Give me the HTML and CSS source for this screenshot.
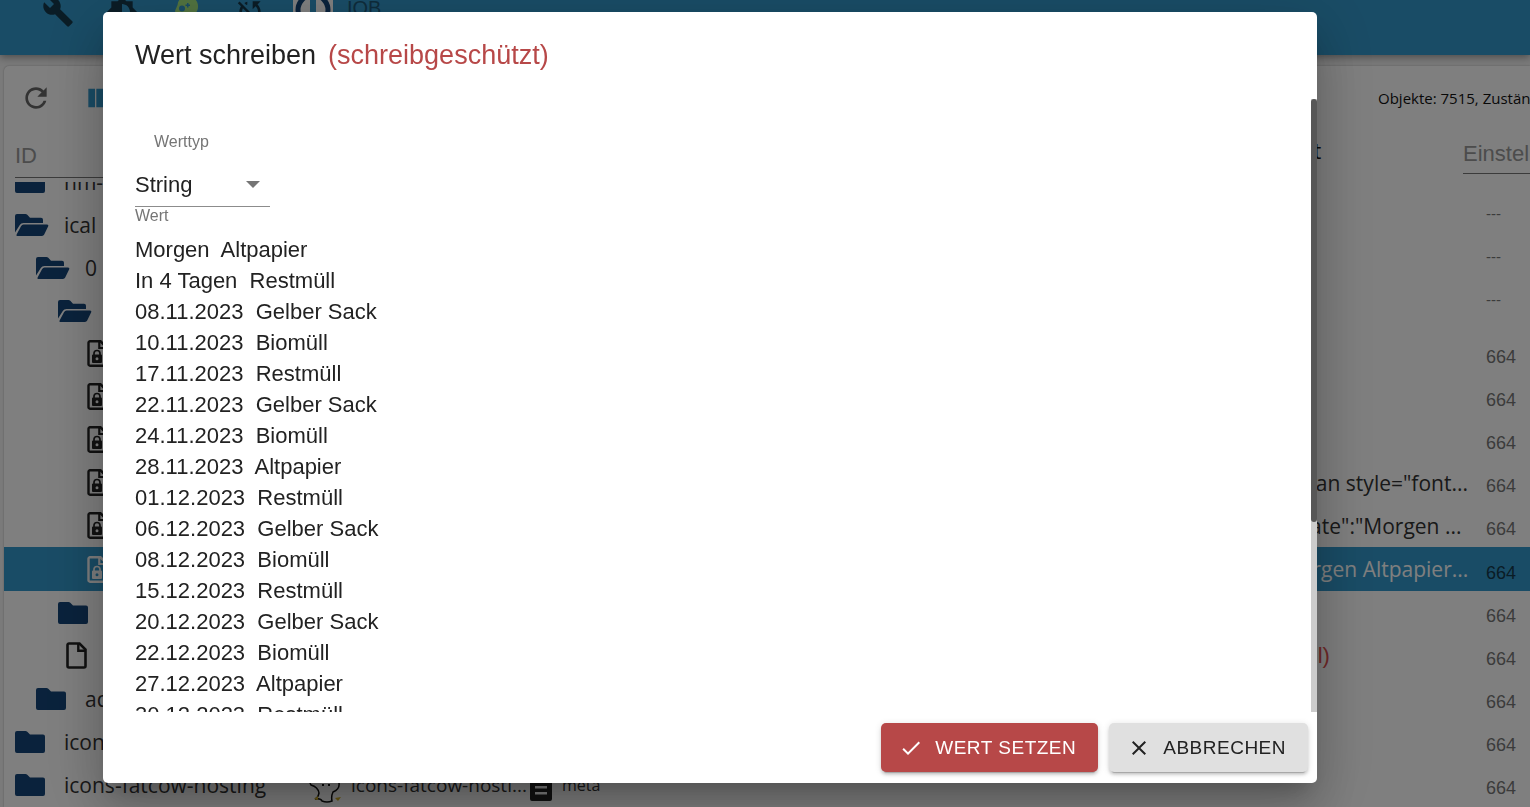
FILE: index.html
```
<!DOCTYPE html>
<html lang="de">
<head>
    <meta charset="UTF-8">
    <meta name="viewport" content="width=device-width, initial-scale=1.0">
    <title>Objekte</title>
    <link rel="stylesheet" href="styles.css">
</head>
<body>

    <!-- icons used more than once -->
    <svg class="sprite" aria-hidden="true">
        <symbol id="folder" viewBox="0 0 30 22">
            <path d="M2 0h8.500q1 0 1.800.8L15 3.500h13a2 2 0 0 1 2 2V20a2 2 0 0 1-2 2H2a2 2 0 0 1-2-2V2a2 2 0 0 1 2-2z"/>
        </symbol>
        <symbol id="folder-open" viewBox="0 0 34 22">
            <path d="M0 18.500V2a2 2 0 0 1 2-2h8.500q1 0 1.800.8L15 3.700h11a2 2 0 0 1 2 2V9H8.500Q6 9 4.800 11z"/>
            <path d="M8.500 10.500H32q2 0 1.200 1.800l-4 8.300Q28.500 22 27 22H2.500Q.8 22 1.600 20.500L6 12.200q.9-1.700 2.500-1.700z"/>
        </symbol>
        <symbol id="file" viewBox="0 0 21 27">
            <path d="M3 1.500h10.500l6 6V24a1.500 1.500 0 0 1-1.500 1.500H3A1.500 1.500 0 0 1 1.500 24V3A1.500 1.500 0 0 1 3 1.500z" fill="none" stroke="currentColor" stroke-width="2.600"/>
            <path d="M12.300 1.500v7.200h7" fill="none" stroke="currentColor" stroke-width="2.400"/>
        </symbol>
        <symbol id="file-lock" viewBox="0 0 21 27">
            <path d="M3 1.300h10.500l6 6V24.200a1.500 1.500 0 0 1-1.500 1.500H3a1.500 1.500 0 0 1-1.500-1.500V2.800A1.500 1.500 0 0 1 3 1.300z" fill="none" stroke="currentColor" stroke-width="2.400"/>
            <path d="M12.300 1.500v6.500h7" fill="none" stroke="currentColor" stroke-width="2.200"/>
            <path d="M7 15v-1.500a3 3 0 0 1 6 0V15" fill="none" stroke="currentColor" stroke-width="1.700"/>
            <path fill-rule="evenodd" d="M6 14.500h8q1 0 1 1V22q0 1-1 1H6q-1 0-1-1v-6.500q0-1 1-1zm4 2.700a1.500 1.500 0 1 0 0 3 1.500 1.500 0 0 0 0-3z"/>
        </symbol>
    </svg>

    <header class="topbar">
        <svg class="top-icon" viewBox="0 0 24 24"><path d="M22.700 19l-9.100-9.100c.9-2.300.4-5-1.500-6.900-2-2-5-2.400-7.400-1.300L9 6 6 9 1.600 4.700C.4 7.100.9 10.100 2.900 12.100c1.900 1.900 4.600 2.400 6.900 1.500l9.100 9.100c.4.4 1 .4 1.400 0l2.300-2.300c.5-.4.5-1.100.1-1.400z"/></svg>
        <svg class="top-icon" viewBox="0 0 24 24"><path fill-rule="evenodd" d="M20 15.310L23.310 12 20 8.690V4h-4.690L12 .69 8.690 4H4v4.690L.69 12 4 15.310V20h4.690L12 23.310 15.310 20H20v-4.690zM12 18V6c3.310 0 6 2.690 6 6s-2.690 6-6 6z"/></svg>
        <svg class="top-icon head" viewBox="0 0 32 32"><path fill-rule="evenodd" d="M17 0a9.500 9.500 0 0 0-9.500 9L5 15q0 1.500 1.500 1.500H8V22q0 2 2 2h3v4h9v-8a10.500 10.500 0 0 0-5-20zM12 9.500a3 3 0 1 0 0 6 3 3 0 0 0 0-6zM17 7v1.500h-1.500V10H17v1.500h1.500V10H20V8.500h-1.500V7z"/></svg>
        <svg class="top-icon" viewBox="0 0 24 24"><path d="M10 6.350V4.260c-.8.210-1.550.54-2.230.96l1.460 1.460c.25-.12.5-.24.77-.33zm-7.140-.94l2.360 2.360C4.450 8.990 4 10.440 4 12c0 2.210.91 4.200 2.360 5.640L4 20h6v-6l-2.240 2.240C6.680 15.150 6 13.660 6 12c0-1 .25-1.940.68-2.770l8.080 8.080c-.25.13-.5.25-.77.34v2.090c.8-.21 1.550-.54 2.230-.96l2.360 2.360 1.270-1.270L4.140 4.140 2.860 5.410zM20 4h-6v6l2.240-2.240C17.320 8.850 18 10.340 18 12c0 1-.25 1.940-.68 2.770l1.460 1.460C19.550 15.010 20 13.560 20 12c0-2.210-.91-4.200-2.360-5.640L20 4z"/></svg>
        <div class="host">
            <svg class="host-logo" viewBox="0 0 40 40"><circle cx="20" cy="22" r="15" fill="none" stroke="#144578" stroke-width="5"/><path d="M17 7h6v28h-6z" fill="#3399cc"/></svg>
            <span class="host-name">IOB</span>
        </div>
    </header>

    <main class="objects">
        <div class="toolbar">
            <button class="tool" aria-label="Aktualisieren"><svg viewBox="0 0 24 24"><path d="M17.650 6.350C16.200 4.900 14.210 4 12 4c-4.420 0-7.990 3.580-7.990 8s3.570 8 7.990 8c3.730 0 6.840-2.550 7.730-6h-2.080c-.82 2.330-3.040 4-5.650 4-3.310 0-6-2.690-6-6s2.690-6 6-6c1.660 0 3.140.69 4.220 1.780L13 11h7V4l-2.350 2.350z"/></svg></button>
            <button class="tool columns" aria-label="Spalten"><svg viewBox="0 0 24 24"><path d="M10 19h5V5h-5v14zm-6 0h5V5H4v14zM16 5v14h5V5h-5z"/></svg></button>
            <span class="counts">Objekte: 7515, Zustände: 6120</span>
        </div>

        <div class="filters">
            <input class="filter" type="text" placeholder="ID" aria-label="ID">
            <span class="head-value">Wert</span>
            <input class="filter settings" type="text" placeholder="Einstellungen" aria-label="Einstellungen">
        </div>

        <div class="tree">
            <div class="row"><svg class="folder"><use href="#folder"/></svg><span>hm-rpc</span></div>
            <div class="row"><svg class="folder open"><use href="#folder-open"/></svg><span>ical</span><span class="acl empty">---</span></div>
            <div class="row level-1"><svg class="folder open"><use href="#folder-open"/></svg><span>0</span><span class="acl empty">---</span></div>
            <div class="row level-2"><svg class="folder open"><use href="#folder-open"/></svg><span>data</span><span class="acl empty">---</span></div>
            <div class="row level-3"><svg class="file"><use href="#file-lock"/></svg><span class="acl">664</span></div>
            <div class="row level-3"><svg class="file"><use href="#file-lock"/></svg><span class="acl">664</span></div>
            <div class="row level-3"><svg class="file"><use href="#file-lock"/></svg><span class="acl">664</span></div>
            <div class="row level-3"><svg class="file"><use href="#file-lock"/></svg><span class="value">&lt;span style="font...</span><span class="acl">664</span></div>
            <div class="row level-3"><svg class="file"><use href="#file-lock"/></svg><span class="value">{"date":"Morgen ...</span><span class="acl">664</span></div>
            <div class="row level-3 selected"><svg class="file"><use href="#file-lock"/></svg><span class="value">Morgen Altpapier...</span><span class="acl">664</span></div>
            <div class="row level-2"><svg class="folder"><use href="#folder"/></svg><span class="acl">664</span></div>
            <div class="row level-2"><svg class="file plain"><use href="#file"/></svg><span class="value null">(null)</span><span class="acl">664</span></div>
            <div class="row level-1"><svg class="folder"><use href="#folder"/></svg><span>admin</span><span class="acl">664</span></div>
            <div class="row"><svg class="folder"><use href="#folder"/></svg><span>icons</span><span class="acl">664</span></div>
            <div class="row">
                <svg class="folder"><use href="#folder"/></svg><span class="id">icons-fatcow-hosting</span>
                <svg class="cow" viewBox="0 0 34 36"><path d="M4 8Q0 14 3 18q7 2 8 8-1 5-4 6 6-1 7 2 5 2 10 0-1-5 1-9 7-3 6-9 0-6-3-8" fill="none" stroke="#111" stroke-width="1.500"/><path d="M14 18h2M20 18h2" stroke="#111" stroke-width="2"/><path d="M6 32l4-3v4zM27 31l6-1-3 4z" fill="#d6b52a"/></svg>
                <span class="name">icons-fatcow-hosti...</span>
                <svg class="meta-icon" viewBox="0 0 22 28"><path fill-rule="evenodd" d="M2 0h12l8 8v18a2 2 0 0 1-2 2H2a2 2 0 0 1-2-2V2Q0 0 2 0zm3 13v2.500h12V13zm0 6v2.500h12V19z"/></svg>
                <span class="type">meta</span>
                <span class="acl">664</span>
            </div>
        </div>
    </main>

    <div class="backdrop">
        <form class="dialog" role="dialog" aria-labelledby="dialogTitle">
            <h2 class="dialog-title" id="dialogTitle">Wert schreiben <span class="readonly">(schreibgeschützt)</span></h2>

            <div class="dialog-body">
                <div class="dialog-content">
                    <label class="type-label" for="valueType">Werttyp</label>
                    <div class="select-wrap">
                        <select id="valueType">
                            <option>String</option>
                            <option>Number</option>
                            <option>Boolean</option>
                            <option>JSON</option>
                        </select>
                        <svg class="arrow" viewBox="0 0 14 7"><path d="M0 0h14L7 7z"/></svg>
                    </div>
                    <label class="value-label" for="value">Wert</label>
                    <textarea id="value" rows="24">Morgen  Altpapier
In 4 Tagen  Restmüll
08.11.2023  Gelber Sack
10.11.2023  Biomüll
17.11.2023  Restmüll
22.11.2023  Gelber Sack
24.11.2023  Biomüll
28.11.2023  Altpapier
01.12.2023  Restmüll
06.12.2023  Gelber Sack
08.12.2023  Biomüll
15.12.2023  Restmüll
20.12.2023  Gelber Sack
22.12.2023  Biomüll
27.12.2023  Altpapier
30.12.2023  Restmüll</textarea>
                </div>
                <div class="scrollbar"><div class="thumb"></div></div>
            </div>

            <div class="dialog-actions">
                <button type="button" class="btn primary"><svg viewBox="0 0 24 24"><path d="M9 16.170L4.830 12l-1.420 1.410L9 19 21 7l-1.410-1.410z"/></svg>Wert setzen</button>
                <button type="button" class="btn"><svg viewBox="0 0 24 24"><path d="M19 6.410L17.590 5 12 10.590 6.410 5 5 6.410 10.590 12 5 17.590 6.410 19 12 13.410 17.590 19 19 17.590 13.410 12z"/></svg>Abbrechen</button>
            </div>
        </form>
    </div>

</body>
</html>
```
FILE: styles.css
```
* {
    box-sizing: border-box;
}
body {
    margin: 0;
    height: 100vh;
    overflow: hidden;
    display: flex;
    flex-direction: column;
    background-color: #f4f4f4;
    color: #333;
    font-family: "Open Sans", sans-serif;
    font-size: 21px;
}
svg {
    fill: currentColor;
    flex: none;
}
.sprite {
    display: none;
}

/* top bar */
.topbar {
    flex: none;
    height: 55px;
    padding-left: 42px;
    display: flex;
    align-items: flex-start;
    gap: 32px;
    background-color: #3399cc;
    box-shadow: 0 2px 8px rgba(0, 0, 0, 0.4);
    color: #15394c;
}
.top-icon {
    width: 32px;
    height: 32px;
    margin-top: -4px;
}
.head {
    color: #a4e57f;
}
.host {
    display: flex;
    align-items: center;
    gap: 14px;
    margin: -12px 0 0 -5px;
    height: 40px;
}
.host-logo {
    width: 40px;
    height: 40px;
    background-color: #fff;
}
.host-name {
    font-family: "Liberation Sans", sans-serif;
    font-size: 20px;
    color: #1d5878;
}

/* object list */
.objects {
    flex: 1;
    min-height: 0;
    margin: 11px 0 0 4px;
    display: flex;
    flex-direction: column;
    background-color: #fff;
    border-top-left-radius: 5px;
    box-shadow: 0 0 2px rgba(0, 0, 0, 0.3);
}
.toolbar {
    flex: none;
    height: 64px;
    padding-left: 16px;
    display: flex;
    align-items: center;
    gap: 31px;
    overflow: hidden;
}
.tool {
    border: none;
    padding: 0;
    background: none;
    color: #666;
}
.tool svg {
    display: block;
    width: 32px;
    height: 32px;
}
.columns {
    color: #3399cc;
}
.counts {
    margin-left: auto;
    width: 152px;
    flex: none;
    white-space: nowrap;
    font-size: 15px;
    color: #111;
}
.filters {
    flex: none;
    height: 52px;
    padding-left: 11px;
    display: flex;
    align-items: center;
}
.filter {
    width: 280px;
    height: 44px;
    padding: 0;
    border: none;
    border-bottom: 1px solid #777;
    background: none;
    font-family: "Liberation Sans", sans-serif;
    font-size: 22px;
}
.filter::placeholder {
    color: #999;
}
.settings {
    width: 67px;
    height: 40px;
    margin-bottom: 4px;
}
.head-value {
    margin-left: auto;
    padding-bottom: 10px;
    width: 189px;
    color: #111;
}
.tree {
    flex: 1;
    min-height: 0;
    overflow: hidden;
}
.row {
    height: 43px;
    padding: 0 14px 0 11px;
    display: flex;
    align-items: center;
    white-space: nowrap;
}
.row:first-child {
    margin-top: -22px;
}
.level-1 {
    padding-left: 32px;
}
.level-2 {
    padding-left: 54px;
}
.level-3 {
    padding-left: 83px;
}
.folder {
    width: 30px;
    height: 22px;
    margin-right: 19px;
    color: #144578;
}
.open {
    width: 34px;
    margin-right: 15px;
}
.file {
    width: 21px;
    height: 27px;
    color: #222;
}
.plain {
    margin-left: 8px;
}
.value {
    margin-left: auto;
    width: 187px;
}
.null {
    font-family: "Liberation Sans", sans-serif;
    font-size: 22px;
    color: #e05050;
}
.acl {
    margin-left: auto;
    padding-top: 8px;
    width: 30px;
    font-family: "Liberation Sans", sans-serif;
    font-size: 18px;
    color: #777;
}
.value + .acl {
    margin-left: 18px;
}
.empty {
    padding: 0 0 22px;
    font-size: 15px;
}
.selected {
    height: 44px;
    background-color: #3399cc;
    color: #fff;
}
.selected .file {
    color: #fff;
}
.selected .value {
    font-weight: 500;
}
.selected .acl {
    color: #15394c;
}
.id {
    width: 244px;
}
.cow {
    width: 34px;
    height: 36px;
}
.name {
    width: 188px;
    padding-left: 9px;
    font-size: 19px;
}
.meta-icon {
    width: 22px;
    height: 28px;
    margin: 4px 10px 0 0;
    color: #222;
}
.type {
    font-size: 16px;
}

/* dialog */
.backdrop {
    position: fixed;
    inset: 0;
    padding: 12px 213px 24px 103px;
    display: flex;
    background-color: rgba(0, 0, 0, 0.5);
}
.dialog {
    flex: 1;
    display: flex;
    flex-direction: column;
    background-color: #fff;
    border-radius: 5px;
    box-shadow: 0 15px 20px -9px rgba(0, 0, 0, 0.2), 0 32px 51px 4px rgba(0, 0, 0, 0.14), 0 12px 61px 11px rgba(0, 0, 0, 0.12);
    font-family: "Liberation Sans", sans-serif;
    color: #222;
}
.dialog-title {
    margin: 0;
    padding: 22px 32px;
    display: flex;
    gap: 12px;
    font-size: 27px;
    font-weight: normal;
    line-height: 43px;
}
.readonly {
    color: #b74848;
}
.dialog-body {
    flex: 1;
    min-height: 0;
    display: flex;
}
.dialog-content {
    flex: 1;
    padding: 32px 26px 13px 32px;
    overflow-y: auto;
    scrollbar-width: none;
}
.scrollbar {
    width: 6px;
    background-color: #ccc;
}
.thumb {
    height: 69%;
    border-radius: 3px;
    background-color: #575757;
}
.type-label,
.value-label {
    display: block;
    font-size: 16px;
    line-height: 22px;
    color: #757575;
}
.type-label {
    margin-left: 19px;
}
.value-label {
    margin-top: -2px;
}
.select-wrap {
    display: flex;
    align-items: center;
    width: 135px;
    height: 44px;
    margin-top: 10px;
    padding-right: 10px;
    border-bottom: 1px solid #8c8c8c;
}
select {
    flex: 1;
    min-width: 0;
    appearance: none;
    border: none;
    padding: 0;
    background: none;
    font-family: inherit;
    font-size: 22px;
    color: inherit;
}
.arrow {
    width: 14px;
    height: 7px;
    color: #757575;
}
textarea {
    display: block;
    width: 100%;
    margin-top: 7px;
    padding: 0;
    border: none;
    outline: none;
    resize: none;
    overflow: hidden;
    background: none;
    font-family: inherit;
    font-size: 22px;
    line-height: 31px;
    color: inherit;
}
.dialog-actions {
    padding: 11px 9px;
    display: flex;
    justify-content: flex-end;
    gap: 11px;
}
.btn {
    height: 49px;
    padding: 0 22px 0 18px;
    display: flex;
    align-items: center;
    gap: 12px;
    border: none;
    border-radius: 5px;
    background-color: #e0e0e0;
    box-shadow: 0 4px 1px -3px rgba(0, 0, 0, 0.2), 0 3px 3px rgba(0, 0, 0, 0.14), 0 1px 7px rgba(0, 0, 0, 0.12);
    font-family: inherit;
    font-size: 19px;
    letter-spacing: 0.5px;
    text-transform: uppercase;
    color: #222;
}
.btn svg {
    width: 24px;
    height: 24px;
}
.primary {
    background-color: #b74848;
    color: #fff;
}
```
